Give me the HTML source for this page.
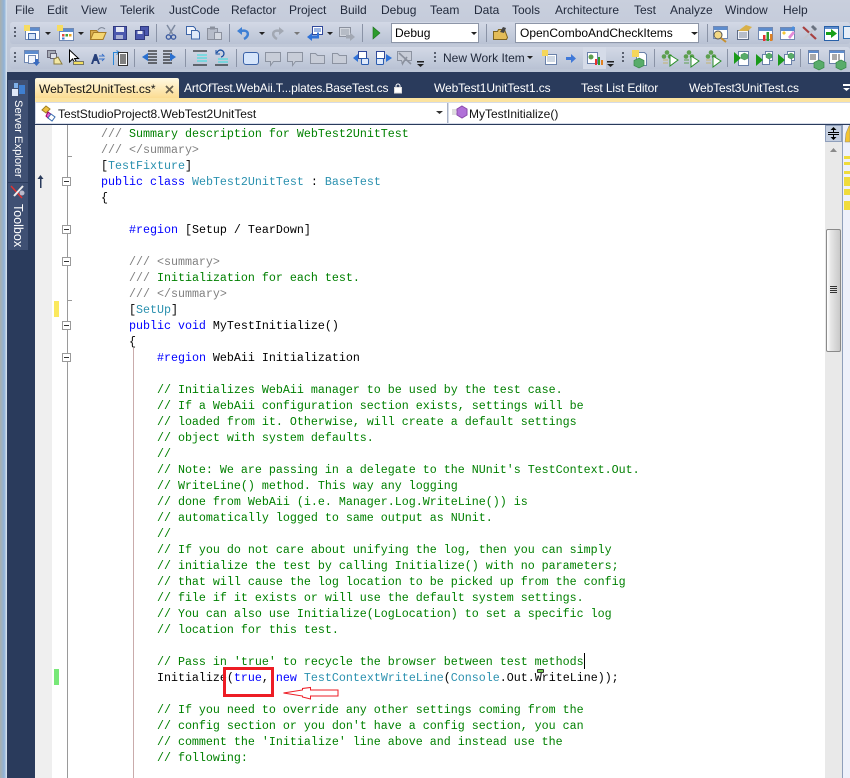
<!DOCTYPE html>
<html><head><meta charset="utf-8"><style>
html,body{margin:0;padding:0}
body{width:850px;height:778px;overflow:hidden;position:relative;background:#fff;font-family:"Liberation Sans",sans-serif}
.a{position:absolute}
.m{position:absolute;top:2px;font-size:12px;line-height:16px;color:#222a3c;white-space:nowrap}
.t{position:absolute;top:80px;font-size:12px;line-height:16px;color:#fff;white-space:nowrap;letter-spacing:-.1px}
pre{position:absolute;left:101px;top:126px;margin:0;font:11.67px/16px "Liberation Mono",monospace;color:#000}
.g{color:#008000}.y{color:#808080}.b{color:#0000ff}.c{color:#2b91af}
.box{position:absolute;left:62px;width:7px;height:7px;border:1px solid #9a9a9a;background:#fff}
.box:after{content:"";position:absolute;left:1px;top:3px;width:5px;height:1px;background:#333}
.h{position:absolute;left:844px;width:6px;background:#f0dc3c}
</style></head><body>
<div class="a" style="left:0;top:0;width:850px;height:72px;background:linear-gradient(#c9cfdd,#bcc5d6)"></div>
<div class="a" style="left:0;top:0;width:7px;height:778px;background:linear-gradient(90deg,#a9b0ae,#8fb2d8 60%,#dfe6ee)"></div>
<div class="m" style="left:15px">File</div><div class="m" style="left:47px">Edit</div><div class="m" style="left:81px">View</div><div class="m" style="left:120px">Telerik</div><div class="m" style="left:169px">JustCode</div><div class="m" style="left:231px">Refactor</div><div class="m" style="left:289px">Project</div><div class="m" style="left:340px">Build</div><div class="m" style="left:381px">Debug</div><div class="m" style="left:430px">Team</div><div class="m" style="left:474px">Data</div><div class="m" style="left:512px">Tools</div><div class="m" style="left:555px">Architecture</div><div class="m" style="left:634px">Test</div><div class="m" style="left:670px">Analyze</div><div class="m" style="left:725px">Window</div><div class="m" style="left:783px">Help</div>
<div class="a" style="left:10px;top:22px;width:840px;height:22px;background:linear-gradient(#d3d9e6,#b9c2d4);border-radius:3px"></div>
<div class="a" style="left:10px;top:47px;width:840px;height:22px;background:linear-gradient(#d3d9e6,#b9c2d4);border-radius:3px"></div>
<div class="a" style="left:391px;top:23px;width:88px;height:20px;box-sizing:border-box;background:#fff;border:1px solid #8d96a8"></div>
<div class="a" style="left:515px;top:23px;width:184px;height:20px;box-sizing:border-box;background:#fff;border:1px solid #8d96a8"></div>
<svg class="a" style="left:0;top:0" width="850" height="72">
<defs>
<g id="win"><rect x=".5" y=".5" width="14" height="12" fill="#fff" stroke="#7189b3"/><rect x="1" y="1" width="13" height="3" fill="#5d8ccd"/></g>
<g id="call"><path d="M.5 .5h15v9h-7l-3 4v-4H.5z" fill="#c8cdd8" stroke="#8c93a1"/></g>
<g id="hex"><path d="M5 0l5 2.500v5L5 10 0 7.500v-5z" fill="#58ac6a" stroke="#3b8a4c" stroke-width=".7"/></g>
<g id="tri"><path d="M0 0l8 5-8 6z" fill="#fff" stroke="#2b8f2b"/></g>
<g id="ftri"><path d="M0 0l7 6-7 6z" fill="#1a9a1a"/></g>
<g id="dots"><circle cx="6" cy="2.500" r="2.300" fill="#5d9f4f"/><circle cx="3" cy="6.500" r="2.300" fill="#5d9f4f"/><circle cx="9" cy="6.500" r="2.300" fill="#5d9f4f"/></g>
</defs>
<g fill="#59606f"><rect x="14" y="27" width="2" height="2"/><rect x="14" y="31" width="2" height="2"/><rect x="14" y="35" width="2" height="2"/><rect x="14" y="52" width="2" height="2"/><rect x="14" y="56" width="2" height="2"/><rect x="14" y="60" width="2" height="2"/><rect x="434" y="52" width="2" height="2"/><rect x="434" y="56" width="2" height="2"/><rect x="434" y="60" width="2" height="2"/><rect x="622" y="52" width="2" height="2"/><rect x="622" y="56" width="2" height="2"/><rect x="622" y="60" width="2" height="2"/></g>
<g stroke="#8a93a6"><path d="M156.500 24v18M229.500 24v18M362.500 24v18M486.500 24v18M707.500 24v18M134.500 49v18M185.500 49v18M236.500 49v18M654.500 49v18M727.500 49v18M800.500 49v18"/></g>
<g fill="#222"><path d="M45 32h6l-3 3zM78 32h6l-3 3zM259 32h6l-3 3zM327 32h6l-3 3zM471 32h6l-3 3zM691 32h7l-3.500 3zM527 56h6l-3 3z"/><path fill="#777" d="M294 32h6l-3 3z"/><rect x="417" y="61" width="7" height="1.500"/><path d="M417 64h7l-3.500 3z"/><rect x="607" y="61" width="7" height="1.500"/><path d="M607 64h7l-3.500 3z"/></g>
<rect x="583" y="47" width="23" height="22" fill="#d5dbe8"/>
<!-- row 1 -->
<g transform="translate(25,27)"><use href="#win"/><rect x="3.500" y="6.500" width="7" height="6" fill="#d3e2f7" stroke="#3e66a8"/><rect x="-1" y="-2" width="6" height="6" fill="#f6dc62"/></g>
<g transform="translate(59,28)"><use href="#win"/><rect x="3" y="6" width="2.500" height="2.500" fill="#e4483c"/><rect x="6.500" y="6" width="2.500" height="2.500" fill="#3da03d"/><rect x="10" y="6" width="2.500" height="2.500" fill="#e8a020"/><rect x="3" y="9.500" width="2.500" height="2" fill="#3f7fd0"/><rect x="-2" y="-3" width="6" height="6" fill="#f6dc62"/></g>
<path d="M90.500 39.500V30.500h6l2 2h6v3" fill="#d9ae4f" stroke="#a67c28"/><path d="M90.500 39.500l3-7h12.500l-3 7z" fill="#f5d672" stroke="#a67c28"/><path d="M98 30c2-3 5-3 7-1" fill="none" stroke="#7d8696"/>
<rect x="113.500" y="26.500" width="13" height="13" fill="#4b58ae" stroke="#2f397f"/><rect x="116" y="27" width="8" height="5" fill="#e4e8f4"/><rect x="116" y="35" width="7" height="4" fill="#a9b0d3"/>
<rect x="140.500" y="26.500" width="8" height="9" fill="#4b58ae" stroke="#2f397f"/><rect x="135.500" y="30.500" width="9" height="9" fill="#4b58ae" stroke="#2f397f"/><rect x="137.500" y="31" width="5" height="3" fill="#e4e8f4"/>
<path d="M167 25l5.500 9M175 25l-5.500 9" stroke="#7e8aa0" stroke-width="1.500"/><circle cx="168.500" cy="37" r="2.200" fill="none" stroke="#3b5aa0" stroke-width="1.300"/><circle cx="173.500" cy="37" r="2.200" fill="none" stroke="#3b5aa0" stroke-width="1.300"/>
<path d="M186.500 26.500h7l2 2v6h-9z" fill="#f0f4fb" stroke="#3e66a8"/><path d="M191.500 30.500h6l2 2v6.500h-8z" fill="#dfe9f8" stroke="#3e66a8"/>
<rect x="207.500" y="28.500" width="10" height="11" fill="#b6bcc9" stroke="#8b919e"/><rect x="214.500" y="32.500" width="7" height="7" fill="#d4d8e0" stroke="#8b919e"/><rect x="210" y="26.500" width="5" height="3" fill="#8b919e"/>
<path d="M237 31l5-4v8z" fill="#3f80d4"/><path d="M241 31c8-2 9 5 3 8" fill="none" stroke="#3f80d4" stroke-width="2.500"/>
<path d="M284 31l-5-4v8z" fill="#a2a8b3"/><path d="M280 31c-8-2-9 5-3 8" fill="none" stroke="#a2a8b3" stroke-width="2.500"/>
<rect x="312.500" y="26.500" width="10" height="8" fill="#fff" stroke="#30489a"/><path d="M314 29h7M314 31h7" stroke="#3a6cc8"/><path d="M307 37l5-4v2.500h5v-3h2v6h-7V41z" fill="#2f72d8"/>
<path d="M339.500 27.500h11v9h-11z" fill="#d3d7df" stroke="#8b919e"/><path d="M341 30h8M341 32h8M341 34h8" stroke="#9aa0ad"/><path d="M346 35h4v-2.500l5 4.500-5 4v-2.500h-4z" fill="#a2a8b3"/>
<path d="M373 27l7 6-7 6z" fill="#2c9c2c" stroke="#1d6f1d" stroke-width=".6"/>
<path d="M493.500 39.500v-8h4l1-2h6l3 8-1 2z" fill="#e3bc58" stroke="#7e6420"/><path d="M500 32l3-5 3 1-2 5z" fill="#444"/>
<g transform="translate(713,26)"><use href="#win"/></g><circle cx="718" cy="35" r="4" fill="#f3d884" stroke="#555"/><path d="M721 38l5 4" stroke="#c89030" stroke-width="2"/>
<path d="M737.500 30.500h11v9h-11z" fill="#f2f4fa" stroke="#5e6c86"/><path d="M739 33h8M739 35h8M739 37h8" stroke="#7a8699"/><path d="M738 31l8-6 6 2-4 4z" fill="#d8b04a"/>
<g transform="translate(758,27)"><use href="#win"/></g><rect x="763" y="35" width="2.500" height="6" fill="#e43030"/><rect x="766.500" y="32" width="2.500" height="9" fill="#2d9c2d"/><rect x="770" y="34" width="2.500" height="7" fill="#e08020"/>
<g transform="translate(780,27)"><use href="#win"/></g><path d="M784 31l2 2-2 2-2-2z" fill="#f5c838"/><path d="M788 37l5-6 2 2-5 6z" fill="#e28ad8"/><path d="M793 26l2 2-2 3-2-2z" fill="#4a8ee0"/>
<path d="M803 27l13 12" stroke="#a84040" stroke-width="2.200"/><path d="M816 27l-12 12" stroke="#c2c6cf" stroke-width="2"/><path d="M812 26l4 4" stroke="#6a7280" stroke-width="3"/>
<rect x="824.500" y="26.500" width="14" height="14" fill="#fff" stroke="#2860a8"/><rect x="825" y="27" width="13" height="2" fill="#5d8ccd"/><path d="M826 32h5v-3l6 4.500-6 4.500v-3h-5z" fill="#18a018"/>
<rect x="843.500" y="26.500" width="7" height="12" fill="#e6eef8" stroke="#2b6cb0"/>
<!-- row 2 -->
<g transform="translate(24,50)"><use href="#win"/></g><rect x="28.500" y="55.500" width="7" height="8" fill="#f0f4fb" stroke="#7189b3"/><path d="M35 59h3v3h2l-3.500 4-3.500-4h2z" fill="#3a6cc0"/>
<rect x="47.500" y="50.500" width="8" height="7" fill="#a6abb6" stroke="#667"/><rect x="50.500" y="53.500" width="6" height="5" fill="#dfe2ea" stroke="#667"/><path d="M54 59l4-2 4 7h-8z" fill="#f3e8a4" stroke="#8a7c40"/>
<path d="M69.500 50v12l3-3 3 5.500 2-1-3-5h4z" fill="#fff" stroke="#000"/><rect x="73.500" y="61.500" width="10" height="3" fill="#f4e060" stroke="#776"/>
<path d="M91 64l3.500-10h2l3.500 10h-2l-1-3h-3l-1 3zM94 59.500h3" fill="#27407a"/><path d="M99 56h5l-2-2M99 59h5l-2 2" fill="none" stroke="#3870c8"/>
<path d="M113.500 65V52.500h5M116.500 50.500l3 2-3 2" stroke="#2a86d8" fill="none"/>
<rect x="118.500" y="52.500" width="9" height="13" fill="#fff" stroke="#333"/><path d="M120 55h6M120 57h6M120 59h6M120 61h6M120 63h6" stroke="#000"/>
<path d="M148 51h9M148 54h9M148 57h9M148 60h9M148 63h9M163 51h9M163 54h9M163 57h9M163 60h9M163 63h9" stroke="#000" transform="translate(0,0)"/><path d="M142 57l6-4v8z" fill="#2a70d0"/><path d="M179 57l-6-4v8z" fill="#2a70d0" transform="translate(-3,0)"/>
<g stroke="#000"><path d="M193 51h14M193 65h14M215 65h13M215 62h0"/></g><g stroke="#2fe0e0"><path d="M197 55h10M197 58h10M197 61h10M218 59h10M218 62h10"/></g><path d="M217 53a3.500 3.500 0 1 1 4 4" fill="none" stroke="#1a4fa0" stroke-width="1.300"/><path d="M216 50v4h4" fill="none" stroke="#1a4fa0"/>
<rect x="243.500" y="52.500" width="15" height="12" rx="2.500" fill="#d6e5fb" stroke="#3a62a8"/>
<g transform="translate(265,52)"><use href="#call"/></g><g transform="translate(287,52)"><use href="#call"/></g>
<g fill="#c8cdd8" stroke="#8c93a1"><path d="M310.500 53.500h5l2 2h7v8h-14zM332.500 53.500h5l2 2h7v8h-14z"/></g>
<path d="M397.500 51.500h14v9h-7l-2 4-1-4h-4z" fill="#c8cdd8" stroke="#8c93a1"/><path d="M399 53l12 11M407 57l-5 7" stroke="#8b919e" stroke-width="1.600"/>
<rect x="358.500" y="51.500" width="8" height="7" fill="#fff" stroke="#30489a"/><rect x="361.500" y="58.500" width="7" height="6" rx="1" fill="#dfe9fa" stroke="#2a5cb0"/><path d="M353 58l5-4v8z" fill="#2f72d8"/>
<rect x="376.500" y="51.500" width="8" height="7" fill="#fff" stroke="#30489a"/><rect x="376.500" y="58.500" width="7" height="6" rx="1" fill="#dfe9fa" stroke="#2a5cb0"/><path d="M392 58l-6-4v8z" fill="#2f72d8"/>
<rect x="545.500" y="54.500" width="11" height="10" fill="#fff" stroke="#6b82aa"/><path d="M547 57h8M547 59h8M547 61h8" stroke="#9fb0c8"/><rect x="542" y="50" width="6" height="6" fill="#f5d65a"/>
<path d="M566 57h5v-3l5 4.500-5 4.500v-3h-5z" fill="#3f78d8"/>
<rect x="587.500" y="52.500" width="10" height="11" fill="#fff" stroke="#6b82aa"/><circle cx="591" cy="57" r="2.500" fill="#5d9f4f"/><rect x="595" y="59" width="2" height="6" fill="#e83030"/><rect x="598" y="57" width="2" height="8" fill="#2d9c2d"/><rect x="601" y="60" width="2" height="5" fill="#e08020"/>
<path d="M636.500 52.500h8l2 2v11h-10z" fill="#fff" stroke="#6b82aa"/><rect x="632" y="50" width="7" height="7" fill="#f5d65a"/><g transform="translate(634,58)"><use href="#hex"/></g>
<g transform="translate(661,50)"><use href="#dots"/></g><path d="M663 60h5M663 63h5" stroke="#c4b470"/><use href="#tri" transform="translate(670,55)"/>
<g transform="translate(683,50)"><use href="#dots"/></g><path d="M684 60h5M684 63h5" stroke="#5d9f4f"/><use href="#tri" transform="translate(691,56)"/>
<g transform="translate(705,50)"><use href="#dots"/></g><path d="M706 60h5M706 63h5" stroke="#c4b470"/><use href="#tri" transform="translate(713,56)"/>
<rect x="738.500" y="51.500" width="10" height="14" fill="#fff" stroke="#6b82aa"/><use href="#ftri" transform="translate(734,52)"/><g transform="translate(741,53) scale(.7)"><use href="#hex"/></g>
<rect x="765.500" y="51.500" width="7" height="9" fill="#fff" stroke="#6b82aa"/><rect x="762.500" y="54.500" width="7" height="10" fill="#fff" stroke="#6b82aa"/><use href="#ftri" transform="translate(756,54)"/><g transform="translate(766,53) scale(.6)"><use href="#hex"/></g>
<rect x="787.500" y="51.500" width="7" height="9" fill="#fff" stroke="#6b82aa"/><rect x="784.500" y="54.500" width="7" height="10" fill="#fff" stroke="#6b82aa"/><use href="#ftri" transform="translate(778,54)"/><g transform="translate(788,53) scale(.6)"><use href="#hex"/></g>
<rect x="808.500" y="50.500" width="10" height="13" fill="#fff" stroke="#6b82aa"/><rect x="809" y="51" width="9" height="2" fill="#5d8ccd"/><path d="M810 55h6M810 57h6M810 59h6" stroke="#555"/><g transform="translate(814,60)"><use href="#hex"/></g>
<rect x="829.500" y="50.500" width="15" height="13" fill="#fff" stroke="#6b82aa"/><rect x="830" y="51" width="14" height="2" fill="#5d8ccd"/><path d="M832 55h5M832 57h5M832 59h5M839 54v9" stroke="#555"/><g transform="translate(836,60)"><use href="#hex"/></g>
</svg>
<div class="a" style="left:395px;top:26px;font-size:12px;line-height:15px">Debug</div>
<div class="a" style="left:520px;top:26px;font-size:12px;line-height:15px">OpenComboAndCheckItems</div>
<div class="a" style="left:443px;top:50px;font-size:12px;line-height:16px;color:#222a3c">New Work Item</div>
<div class="a" style="left:7px;top:72px;width:843px;height:706px;background:#2a3b5c"></div>
<div class="a" style="left:8px;top:80px;width:20px;height:170px;background:#3f5073"></div>
<div class="a" style="left:8px;top:182px;width:20px;height:1px;background:#2a3b5c"></div>
<div class="a" style="left:10px;top:100px;font-size:11.2px;line-height:16px;color:#fff;writing-mode:vertical-rl;white-space:nowrap">Server Explorer</div>
<div class="a" style="left:10px;top:204px;font-size:12.500px;line-height:16px;color:#fff;writing-mode:vertical-rl">Toolbox</div>
<svg class="a" style="left:10px;top:80px" width="18" height="130"><rect x="2" y="9" width="6" height="7" fill="#dfe8f8"/><rect x="9" y="5" width="6" height="9" fill="#3f7fd0"/><rect x="4" y="3" width="4" height="5" fill="#7fb0e8"/><path d="M1 106l11 12" stroke="#e03030" stroke-width="1.500"/><path d="M13 106l-9 10" stroke="#eee" stroke-width="2"/><circle cx="12" cy="113" r="2.500" fill="#bbc"/></svg>
<div class="a" style="left:35px;top:78px;width:144px;height:20px;background:linear-gradient(#fff9e2,#fbdc92);border-radius:2px 2px 0 0"></div>
<div class="a" style="left:39px;top:81px;font-size:12px;line-height:16px;color:#111;white-space:nowrap">WebTest2UnitTest.cs*</div>
<svg class="a" style="left:165px;top:85px" width="10" height="10"><path d="M1 1l7 7M8 1l-7 7" stroke="#6a6250" stroke-width="1.700"/></svg>
<div class="t" style="left:184px;letter-spacing:-.16px">ArtOfTest.WebAii.T...plates.BaseTest.cs</div>
<svg class="a" style="left:394px;top:83px" width="9" height="11"><rect x=".5" y="4.500" width="7" height="5.500" fill="#fff" stroke="#ddd"/><path d="M2 4.500V3a2 2 0 0 1 4 0v1.500" stroke="#fff" fill="none"/></svg>
<div class="t" style="left:434px">WebTest1UnitTest1.cs</div>
<div class="t" style="left:581px">Test List Editor</div>
<div class="t" style="left:689px">WebTest3UnitTest.cs</div>
<svg class="a" style="left:843px;top:84px" width="7" height="8"><rect x="0" y="0" width="7" height="2" fill="#fff"/><path d="M0 4h7l-3.500 3z" fill="#fff"/></svg>
<div class="a" style="left:35px;top:98px;width:815px;height:4px;background:#fbe3a0"></div>
<div class="a" style="left:35px;top:102px;width:815px;height:23px;background:#d5dbe8"></div>
<div class="a" style="left:36px;top:103px;width:411px;height:20px;background:#fff;border-right:1px solid #a9b2c5"></div>
<div class="a" style="left:449px;top:103px;width:401px;height:20px;background:#fff"></div>
<svg class="a" style="left:40px;top:104px" width="20" height="18"><path d="M2 6l4-4 4 3-4 4z" fill="#f0c040" stroke="#a08020"/><path d="M8 8l4 3-4 3-2-2z" fill="#e060d0" stroke="#906"/><path d="M11 10l4 3-3 4-4-3z" fill="#fff" stroke="#3a6cb0"/></svg>
<svg class="a" style="left:435px;top:110px" width="10" height="6"><path d="M1 1h7l-3.500 3z" fill="#333"/></svg>
<svg class="a" style="left:451px;top:104px" width="17" height="17"><path d="M1 6h5M1 8h4M1 10h5" stroke="#bbb"/><path d="M11 2l5 3v6l-5 3-5-3V5z" fill="#b070d8" stroke="#8a4aaa"/></svg>
<div class="a" style="left:58px;top:106px;font-size:12px;line-height:16px;color:#111;letter-spacing:-.05px">TestStudioProject8.WebTest2UnitTest</div>
<div class="a" style="left:469px;top:106px;font-size:12px;line-height:16px;color:#111">MyTestInitialize()</div>
<div class="a" style="left:35px;top:125px;width:790px;height:653px;background:#fff"></div>
<div class="a" style="left:35px;top:125px;width:17px;height:653px;background:#efefef"></div>
<div class="a" style="left:35px;top:124px;width:815px;height:1px;background:#2a3b5c"></div>
<div class="a" style="left:67px;top:125px;width:1px;height:653px;background:#9a9a9a"></div>
<div class="a" style="left:133px;top:348px;width:1px;height:430px;background:#c9abab"></div>
<div class="a" style="left:67px;top:156px;width:5px;height:1px;background:#9a9a9a"></div>
<div class="a" style="left:67px;top:300px;width:5px;height:1px;background:#9a9a9a"></div>
<div class="box" style="top:177px"></div><div class="box" style="top:225px"></div><div class="box" style="top:257px"></div><div class="box" style="top:321px"></div><div class="box" style="top:353px"></div>
<div class="a" style="left:54px;top:301px;width:5px;height:16px;background:#fbe95e"></div>
<div class="a" style="left:54px;top:669px;width:5px;height:16px;background:#78e878"></div>
<svg class="a" style="left:35px;top:174px" width="12" height="16"><path d="M5 14V5H2.500L5.500 1l3 4H6.500v9z" fill="#2a3b5c"/></svg>
<pre><span class="y">///</span><span class="g"> Summary description for WebTest2UnitTest</span>
<span class="y">/// &lt;/summary&gt;</span>
[<span class="c">TestFixture</span>]
<span class="b">public class</span> <span class="c">WebTest2UnitTest</span> : <span class="c">BaseTest</span>
{

    <span class="b">#region</span> [Setup / TearDown]

    <span class="y">/// &lt;summary&gt;</span>
    <span class="y">///</span><span class="g"> Initialization for each test.</span>
    <span class="y">/// &lt;/summary&gt;</span>
    [<span class="c">SetUp</span>]
    <span class="b">public void</span> MyTestInitialize()
    {
        <span class="b">#region</span> WebAii Initialization

<span class="g">        // Initializes WebAii manager to be used by the test case.
        // If a WebAii configuration section exists, settings will be
        // loaded from it. Otherwise, will create a default settings
        // object with system defaults.
        //
        // Note: We are passing in a delegate to the NUnit's TestContext.Out.
        // WriteLine() method. This way any logging
        // done from WebAii (i.e. Manager.Log.WriteLine()) is
        // automatically logged to same output as NUnit.
        //
        // If you do not care about unifying the log, then you can simply
        // initialize the test by calling Initialize() with no parameters;
        // that will cause the log location to be picked up from the config
        // file if it exists or will use the default system settings.
        // You can also use Initialize(LogLocation) to set a specific log
        // location for this test.

        // Pass in 'true' to recycle the browser between test methods</span>
        Initialize(<span class="b">true</span>, <span class="b">new</span> <span class="c">TestContextWriteLine</span>(<span class="c">Console</span>.Out.WriteLine));

<span class="g">        // If you need to override any other settings coming from the
        // config section or you don't have a config section, you can
        // comment the 'Initialize' line above and instead use the
        // following:</span></pre>
<div class="a" style="left:584px;top:653px;width:1px;height:16px;background:#000"></div>
<div class="a" style="left:537px;top:669px;width:5px;height:2px;background:#78d050;border:1px solid #333;border-radius:1px"></div>
<div class="a" style="left:223px;top:667px;width:45px;height:24px;border:3px solid #ed1c24"></div>
<svg class="a" style="left:280px;top:685px" width="62" height="16"><path d="M3.500 8l19-3v-1.500l8-1 0 2.500h27.500v6h-27.500v3l-8-2v-1z" fill="#fff" stroke="#ed1c24"/></svg>
<div class="a" style="left:825px;top:125px;width:17px;height:653px;background:#e9e9e9"></div>
<div class="a" style="left:842px;top:125px;width:1px;height:653px;background:#8f9fbb"></div>
<div class="a" style="left:843px;top:125px;width:7px;height:653px;background:#eef1fb"></div>
<div class="a" style="left:825px;top:125px;width:17px;height:17px;background:#c5cfe0;border:1px solid #8f9fbb;box-sizing:border-box"></div>
<svg class="a" style="left:826px;top:126px" width="15" height="15"><path d="M2 6.500h11M2 8.500h11" stroke="#000"/><path d="M7.500 1l3 3h-6zM7.500 14l3-3h-6z" fill="#000"/><path d="M7.500 4v2M7.500 9v2" stroke="#000"/></svg>
<svg class="a" style="left:829px;top:148px" width="9" height="6"><path d="M4.500 0l3.500 4H1z" fill="#8a8a8a"/></svg>
<div class="a" style="left:826px;top:229px;width:15px;height:123px;box-sizing:border-box;border:1px solid #8a8a8a;border-radius:2px;background:linear-gradient(90deg,#fff,#e6e6e6 30%,#c9c9c9)"></div>
<svg class="a" style="left:829px;top:286px" width="9" height="9"><path d="M1 .5h7M1 2.500h7M1 4.500h7M1 6.500h7" stroke="#333"/></svg>
<svg class="a" style="left:843px;top:125px" width="7" height="18"><path d="M7 0v17H2L3 8 6 1z" fill="#f4c430" stroke="#888" stroke-width=".5"/></svg>
<div class="h" style="top:156px;height:3px"></div>
<div class="h" style="top:162px;height:3px"></div>
<div class="h" style="top:171px;height:3px"></div>
<div class="h" style="top:177px;height:9px"></div>
<div class="h" style="top:189px;height:6px"></div>
<div class="h" style="top:201px;height:9px"></div>
</body></html>
